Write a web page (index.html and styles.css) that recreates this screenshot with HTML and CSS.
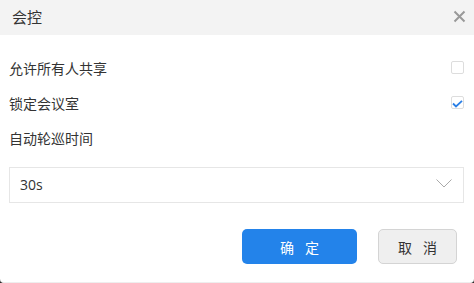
FILE: index.html
```html
<!DOCTYPE html>
<html lang="zh">
<head>
<meta charset="utf-8">
<title>会控</title>
<link rel="stylesheet" href="styles.css">
</head>
<body>
<div class="dialog">
  <div class="header">
    <span class="title">会控</span>
    <svg class="close" width="13" height="13" viewBox="0 0 13 13"><path d="M1.5 1.5 L11.5 11.5 M11.5 1.5 L1.5 11.5" stroke="#999" stroke-width="2" fill="none"/></svg>
  </div>
  <div class="body">
    <div class="row">
      <span class="label">允许所有人共享</span>
      <span class="checkbox"></span>
    </div>
    <div class="row">
      <span class="label">锁定会议室</span>
      <span class="checkbox">
        <svg width="13" height="13" viewBox="0 0 13 13"><path d="M2 6.5 L5 9.5 L11 3.8" stroke="#2a7fe6" stroke-width="1.8" fill="none"/></svg>
      </span>
    </div>
    <div class="row">
      <span class="label">自动轮巡时间</span>
    </div>
    <div class="select">
      <span>30s</span>
      <svg width="16" height="9" viewBox="0 0 16 9"><path d="M0.5 0.5 L8 8 L15.5 0.5" stroke="#aaa" stroke-width="1" fill="none"/></svg>
    </div>
    <div class="actions">
      <button class="btn primary">确 定</button>
      <button class="btn secondary">取 消</button>
    </div>
  </div>
</div>
</body>
</html>
```
FILE: styles.css
```css
html, body {
  margin: 0;
  padding: 0;
  background: #2b2b2b;
  height: 283px;
  overflow: hidden;
}
.dialog {
  width: 474px;
  height: 282px;
  background: #fff;
  border-radius: 0 0 4px 4px;
  border-bottom: 1px solid #eee;
  font-family: "Noto Sans CJK SC", "Noto Sans", sans-serif;
  color: #333;
}
.header {
  height: 35px;
  background: #f3f3f3;
  display: flex;
  align-items: center;
  justify-content: space-between;
  padding: 0 8px 0 12px;
}
.title {
  font-size: 15px;
  color: #333;
  line-height: 1;
  margin-top: -3px;
}
.close {
  margin-top: -3px;
}
.body {
  padding: 15px 10px 0 9px;
}
.row {
  height: 35px;
  display: flex;
  align-items: center;
  justify-content: space-between;
}
.label {
  font-size: 14px;
  line-height: 1;
}
.checkbox {
  width: 11px;
  height: 11px;
  border: 1px solid #ddd;
  border-radius: 2px;
  display: flex;
  align-items: center;
  justify-content: center;
  position: relative;
}
.checkbox svg {
  position: absolute;
  left: -1px;
  top: 0;
}
.select {
  margin-top: 12px;
  height: 34px;
  border: 1px solid #e6e6e6;
  display: flex;
  align-items: center;
  justify-content: space-between;
  padding: 0 11px 0 10px;
  font-size: 14px;
  font-family: "Open Sans", "Noto Sans", sans-serif;
}
.select span {
  margin-top: -1px;
}
.select svg {
  margin-top: -3px;
}
.actions {
  display: flex;
  justify-content: flex-end;
  gap: 21px;
  margin-top: 26px;
  padding-right: 7px;
}
.btn {
  height: 35px;
  border-radius: 5px;
  font-family: "Noto Sans CJK SC", sans-serif;
  font-size: 14px;
  letter-spacing: 4px;
  padding: 0 0 0 4px;
  cursor: pointer;
}
.primary {
  width: 115px;
  background: #2383ea;
  border: none;
  color: #fff;
}
.secondary {
  width: 79px;
  background: #efefef;
  border: 1px solid #d4d4d4;
  color: #333;
}
```
